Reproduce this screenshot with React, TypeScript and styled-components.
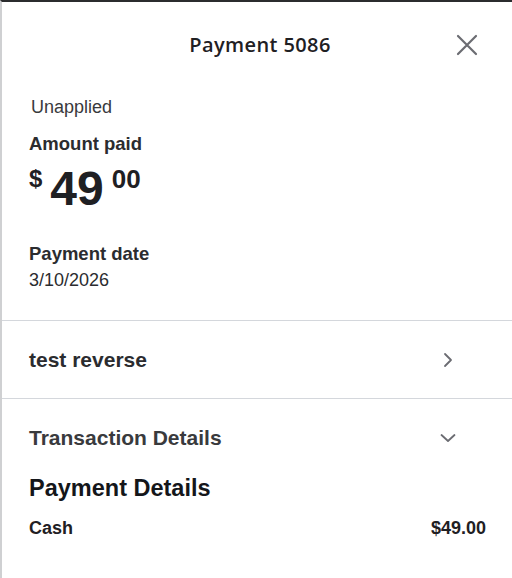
import styled, { createGlobalStyle } from "styled-components";

const GlobalStyle = createGlobalStyle`
  html, body {
    margin: 0;
    padding: 0;
    background: #ffffff;
  }
  body {
    font-family: "Liberation Sans", Arial, sans-serif;
    color: #393a3d;
  }
`;

const Panel = styled.div`
  box-sizing: border-box;
  width: 512px;
  height: 578px;
  display: flex;
  flex-direction: column;
  background: #ffffff;
  border-top: 2px solid #2b2c2e;
  border-left: 2px solid #cfd0d2;
  overflow: hidden;
`;

const Header = styled.header`
  height: 85px;
  padding-left: 6px;
  display: grid;
  grid-template-columns: 1fr auto 1fr;
  align-items: center;
`;

const Title = styled.h1`
  grid-column: 2;
  margin: 0;
  font-family: "Open Sans", "Liberation Sans", sans-serif;
  font-size: 20px;
  font-weight: 600;
  letter-spacing: 0.4px;
  color: #1f2023;
`;

const CloseButton = styled.button`
  grid-column: 3;
  justify-self: end;
  margin-right: 33px;
  width: 24px;
  height: 24px;
  padding: 0;
  border: 0;
  background: none;
  display: flex;
  align-items: center;
  justify-content: center;
  cursor: pointer;
`;

const Summary = styled.section`
  padding: 9px 26px 29px 27px;
  display: flex;
  flex-direction: column;
`;

const Status = styled.div`
  margin-left: 2px;
  font-size: 18px;
  line-height: 22px;
  color: #393a3d;
`;

interface LabelProps {
  $gap: number;
}

const Label = styled.div<LabelProps>`
  margin-top: ${(p) => p.$gap}px;
  font-size: 18.5px;
  line-height: 22px;
  font-weight: 700;
  color: #2b2c2f;
`;

const Value = styled.div`
  margin-top: 4px;
  font-size: 18px;
  line-height: 22px;
  color: #2b2c2f;
`;

const Amount = styled.div`
  margin-top: 10px;
  display: flex;
  align-items: flex-start;
  gap: 8px;
  font-weight: 700;
  color: #1f2023;
`;

interface AmountSmallProps {
  $size: number;
}

const AmountSmall = styled.span<AmountSmallProps>`
  margin-top: 2px;
  font-size: ${(p) => p.$size}px;
  line-height: 24px;
`;

const AmountBig = styled.span`
  font-size: 48px;
  line-height: 48px;
`;

const Divider = styled.hr`
  margin: 0;
  border: 0;
  height: 1px;
  background: #d4d7dc;
`;

const LinkRow = styled.div`
  height: 77px;
  display: flex;
  align-items: center;
  justify-content: space-between;
  padding: 0 56px 0 27px;
`;

const RowTitle = styled.div`
  font-size: 21px;
  line-height: 24px;
  font-weight: 700;
  color: #2b2c2f;
`;

const Details = styled.section`
  padding: 27px 26px 0 27px;
  display: flex;
  flex-direction: column;
`;

const DetailsToggle = styled.div`
  display: flex;
  align-items: center;
  justify-content: space-between;
  padding-right: 30px;
`;

const ToggleTitle = styled(RowTitle)`
  color: #393a3d;
`;

const SectionTitle = styled.h2`
  margin: 24px 0 0;
  font-size: 23.5px;
  line-height: 28px;
  font-weight: 700;
  color: #14161a;
`;

const LineItem = styled.div`
  margin-top: 15px;
  display: flex;
  justify-content: space-between;
  font-size: 18px;
  line-height: 22px;
  font-weight: 700;
  color: #1f2023;
`;

const ChevronRight = () => (
  <svg width="16" height="16" viewBox="0 0 16 16" aria-hidden="true">
    <path d="M5 2 L11 8 L5 14" fill="none" stroke="#6b6c72" strokeWidth="1.8" strokeLinecap="round" strokeLinejoin="round" />
  </svg>
);

const ChevronDown = () => (
  <svg width="16" height="16" viewBox="0 0 16 16" aria-hidden="true">
    <path d="M1.5 5 L8 11 L14.5 5" fill="none" stroke="#6b6c72" strokeWidth="1.8" strokeLinecap="round" strokeLinejoin="round" />
  </svg>
);

const CloseIcon = () => (
  <svg width="22" height="22" viewBox="0 0 22 22" aria-hidden="true">
    <path d="M2 2 L20 20 M20 2 L2 20" fill="none" stroke="#6b6c72" strokeWidth="2.2" strokeLinecap="round" />
  </svg>
);

const App = () => {
  return (
    <>
      <GlobalStyle />
      <Panel>
        <Header>
          <Title>Payment 5086</Title>
          <CloseButton aria-label="Close">
            <CloseIcon />
          </CloseButton>
        </Header>

        <Summary>
          <Status>Unapplied</Status>
          <Label $gap={15}>Amount paid</Label>
          <Amount>
            <AmountSmall $size={24}>$</AmountSmall>
            <AmountBig>49</AmountBig>
            <AmountSmall $size={26}>00</AmountSmall>
          </Amount>
          <Label $gap={30}>Payment date</Label>
          <Value>3/10/2026</Value>
        </Summary>

        <Divider />
        <LinkRow>
          <RowTitle>test reverse</RowTitle>
          <ChevronRight />
        </LinkRow>
        <Divider />

        <Details>
          <DetailsToggle>
            <ToggleTitle>Transaction Details</ToggleTitle>
            <ChevronDown />
          </DetailsToggle>
          <SectionTitle>Payment Details</SectionTitle>
          <LineItem>
            <span>Cash</span>
            <span>$49.00</span>
          </LineItem>
        </Details>
      </Panel>
    </>
  );
};

export default App;
